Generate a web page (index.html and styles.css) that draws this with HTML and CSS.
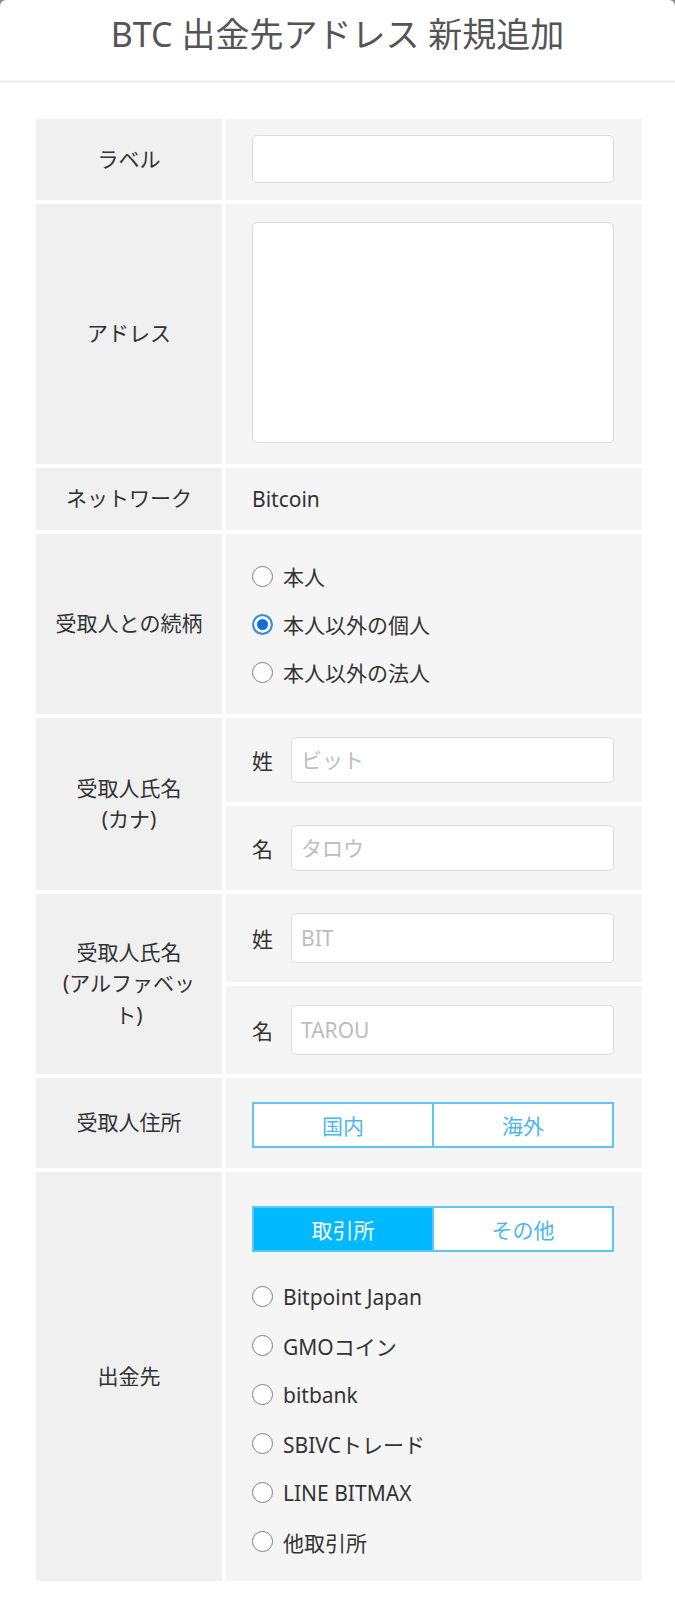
FILE: index.html
```html
<!DOCTYPE html>
<html lang="ja">
<head>
    <meta charset="UTF-8">
    <meta name="viewport" content="width=device-width, initial-scale=1.0">
    <title>BTC 出金先アドレス 新規追加</title>
    <link rel="stylesheet" href="styles.css">
</head>
<body>
    <div class="sheet">
        <header class="sheet-head">
            <h1>BTC 出金先アドレス 新規追加</h1>
        </header>

        <div class="form-grid">
            <div class="field-head">ラベル</div>
            <div class="field-body row-label">
                <input class="text-input" type="text">
            </div>

            <div class="field-head">アドレス</div>
            <div class="field-body row-address">
                <textarea class="text-area"></textarea>
            </div>

            <div class="field-head">ネットワーク</div>
            <div class="field-body row-network">Bitcoin</div>

            <div class="field-head">受取人との続柄</div>
            <div class="field-body row-relation">
                <label class="radio-item"><input type="radio" name="relation"> 本人</label>
                <label class="radio-item"><input type="radio" name="relation" checked> 本人以外の個人</label>
                <label class="radio-item"><input type="radio" name="relation"> 本人以外の法人</label>
            </div>

            <div class="field-head span-2">受取人氏名<br>(カナ)</div>
            <div class="field-body name-row">
                <span class="name-tag">姓</span>
                <input class="text-input" type="text" placeholder="ビット">
            </div>
            <div class="field-body name-row">
                <span class="name-tag">名</span>
                <input class="text-input" type="text" placeholder="タロウ">
            </div>

            <div class="field-head span-2">受取人氏名<br>(アルファベット)</div>
            <div class="field-body name-row tall">
                <span class="name-tag">姓</span>
                <input class="text-input" type="text" placeholder="BIT">
            </div>
            <div class="field-body name-row tall">
                <span class="name-tag">名</span>
                <input class="text-input" type="text" placeholder="TAROU">
            </div>

            <div class="field-head">受取人住所</div>
            <div class="field-body row-address-area">
                <div class="segment">
                    <button class="segment-btn">国内</button>
                    <button class="segment-btn">海外</button>
                </div>
            </div>

            <div class="field-head">出金先</div>
            <div class="field-body row-dest">
                <div class="segment">
                    <button class="segment-btn active">取引所</button>
                    <button class="segment-btn">その他</button>
                </div>
                <div class="dest-list">
                    <label class="radio-item wide"><input type="radio" name="dest"> Bitpoint Japan</label>
                    <label class="radio-item wide"><input type="radio" name="dest"> GMOコイン</label>
                    <label class="radio-item wide"><input type="radio" name="dest"> bitbank</label>
                    <label class="radio-item wide"><input type="radio" name="dest"> SBIVCトレード</label>
                    <label class="radio-item wide"><input type="radio" name="dest"> LINE BITMAX</label>
                    <label class="radio-item wide"><input type="radio" name="dest"> 他取引所</label>
                </div>
            </div>
        </div>
    </div>
</body>
</html>
```

FILE: styles.css
```css
* {
    margin: 0;
    padding: 0;
    box-sizing: border-box;
}

body {
    font-family: 'Noto Sans', 'Noto Sans CJK JP', sans-serif;
    font-size: 21px;
    color: #333;
    background: #8a8a8a;
}

.sheet {
    background: white;
    min-height: 100vh;
    border-radius: 6px 6px 0 0;
    padding-bottom: 19px;
}

.sheet-head {
    height: 83px;
    border-bottom: 3px solid #f2f2f2;
    display: flex;
    align-items: center;
    justify-content: center;
}

.sheet-head h1 {
    font-size: 34px;
    font-weight: normal;
    color: #555;
    margin-top: -16px;
}

/* two column form: label on the left, control on the right */
.form-grid {
    display: grid;
    grid-template-columns: 186px 1fr;
    gap: 4px;
    margin: 36px 33px 0 36px;
}

.field-head {
    background: #f0f0f0;
    display: flex;
    align-items: center;
    justify-content: center;
    text-align: center;
    padding: 0 16px;
    line-height: 1.5;
}

.field-head.span-2 {
    grid-row: span 2;
}

.field-body {
    background: #f5f5f5;
    padding: 0 28px 0 26px;
}

.text-input {
    display: block;
    width: 100%;
    height: 48px;
    border: 1px solid #dcdcdc;
    border-radius: 5px;
    background: white;
    font: inherit;
    color: #333;
    padding: 0 9px;
}

.text-input::placeholder {
    color: #bdbdbd;
}

.text-area {
    display: block;
    width: 100%;
    height: 221px;
    border: 1px solid #dcdcdc;
    border-radius: 5px;
    background: white;
    resize: none;
    font: inherit;
}

.row-label {
    padding-top: 16px;
    padding-bottom: 17px;
}

.row-address {
    padding-top: 18px;
    padding-bottom: 21px;
}

.row-network {
    height: 62px;
    display: flex;
    align-items: center;
}

.row-relation {
    padding-top: 18px;
    padding-bottom: 18px;
}

.radio-item {
    display: flex;
    align-items: center;
    gap: 10px;
    height: 48px;
}

.radio-item.wide {
    height: 49px;
}

.radio-item input {
    appearance: none;
    width: 21px;
    height: 21px;
    border: 1.5px solid #808080;
    border-radius: 50%;
    background: white;
    flex-shrink: 0;
}

.radio-item input:checked {
    border: 2px solid #3d8fe0;
    background: #0b6fd6;
    box-shadow: inset 0 0 0 3px white;
}

.name-row {
    display: flex;
    align-items: center;
    gap: 18px;
    height: 84px;
}

.name-row.tall {
    height: 88px;
}

.name-row .text-input {
    flex: 1;
    height: 46px;
}

.name-row.tall .text-input {
    height: 50px;
}

.name-tag {
    width: 21px;
    flex-shrink: 0;
}

.row-address-area {
    padding-top: 24px;
    padding-bottom: 20px;
}

.row-dest {
    padding-top: 34px;
    padding-bottom: 15px;
}

.segment {
    display: flex;
    border: 2px solid #5cc6f7;
    background: white;
}

.segment-btn {
    flex: 1;
    height: 42px;
    border: none;
    background: white;
    color: #4db6ee;
    font: inherit;
}

.segment-btn + .segment-btn {
    border-left: 2px solid #5cc6f7;
}

.segment-btn.active {
    background: #00b9ff;
    color: white;
}

.dest-list {
    margin-top: 20px;
}
```
